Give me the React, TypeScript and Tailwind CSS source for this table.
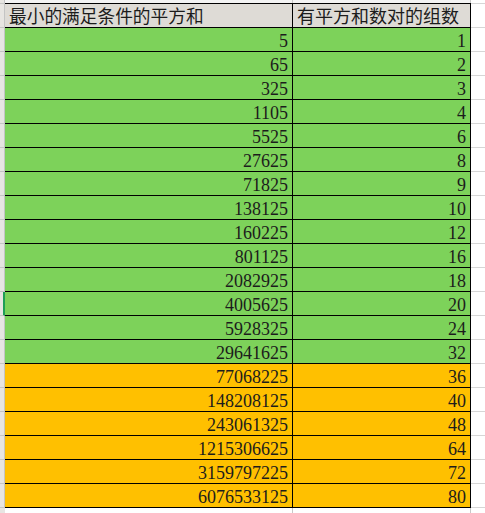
const ROWS: [number, number][] = [
  [5, 1],
  [65, 2],
  [325, 3],
  [1105, 4],
  [5525, 6],
  [27625, 8],
  [71825, 9],
  [138125, 10],
  [160225, 12],
  [801125, 16],
  [2082925, 18],
  [4005625, 20],
  [5928325, 24],
  [29641625, 32],
  [77068225, 36],
  [148208125, 40],
  [243061325, 48],
  [1215306625, 64],
  [3159797225, 72],
  [6076533125, 80],
]

// 前 14 行绿色，其余橙色
const GREEN_COUNT = 14
// 当前选中的行（4005625）
const SELECTED = 11

export default function App() {
  return (
    <div className="flex h-[513px] w-[485px] overflow-hidden bg-white font-['Liberation_Serif','Noto_Sans_CJK_SC',serif] text-[18px] text-[#1c1c1c]">
      {/* 行号条 */}
      <div className="flex w-[5px] shrink-0 flex-col bg-[#e7e5e2]">
        <div className="h-[4px] shrink-0 border-r border-b border-[#c4c4c4]" />
        <div className="h-[24px] shrink-0 border-r border-b border-[#c4c4c4]" />
        {ROWS.map(([n], i) => (
          <div
            key={n}
            className={
              i === SELECTED
                ? 'h-[24px] shrink-0 border-r-2 border-b border-r-[#1e9e56] border-b-[#c4c4c4]'
                : 'h-[24px] shrink-0 border-r border-b border-[#c4c4c4]'
            }
          />
        ))}
      </div>

      {/* 表格 */}
      <div className="flex w-[466px] shrink-0 flex-col">
        <div className="flex h-[3px] shrink-0 bg-[#f3f3f3]">
          <div className="w-[288px] border-r border-[#c8c8c8]" />
          <div className="w-[178px] border-r border-[#c8c8c8]" />
        </div>
        <div className="flex h-[25px] shrink-0 border-y border-black bg-[#dedbd6] leading-[20px]">
          <div className="flex w-[288px] items-end border-r border-black pl-[4px] text-[17.7px]">
            最小的满足条件的平方和
          </div>
          <div className="flex w-[178px] items-end border-r border-black pl-[4px]">
            有平方和数对的组数
          </div>
        </div>
        {ROWS.map(([sum, count], i) => (
          <div
            key={sum}
            className={`flex h-[24px] shrink-0 border-b border-black leading-[20px] ${
              i < GREEN_COUNT ? 'bg-[#7dd25a]' : 'bg-[#ffc000]'
            }`}
          >
            <div className="flex w-[288px] items-end justify-end border-r border-black pr-[4px]">
              {sum}
            </div>
            <div className="flex w-[178px] items-end justify-end border-r border-black pr-[4px]">
              {count}
            </div>
          </div>
        ))}
        <div className="flex flex-1">
          <div className="w-[288px] border-r border-[#c8c8c8]" />
          <div className="w-[178px] border-r border-[#c8c8c8]" />
        </div>
      </div>

      {/* 右侧空白网格 */}
      <div className="flex flex-1 flex-col">
        <div className="h-[4px] shrink-0 border-b border-[#d6d6d6]" />
        <div className="h-[24px] shrink-0 border-b border-[#d6d6d6]" />
        {ROWS.map(([n]) => (
          <div key={n} className="h-[24px] shrink-0 border-b border-[#d6d6d6]" />
        ))}
      </div>
    </div>
  )
}
